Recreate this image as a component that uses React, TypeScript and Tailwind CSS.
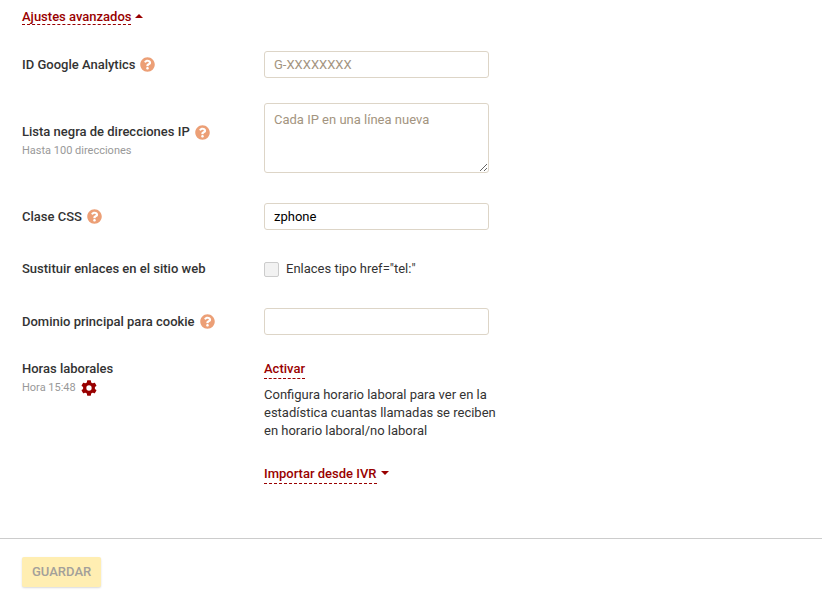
import clsx from 'clsx'
import { ReactNode, useState } from 'react'
import { FaQuestionCircle } from 'react-icons/fa'

type RowProps = {
  label: string
  htmlFor?: string
  hint?: ReactNode
  help?: boolean
  align?: 'center' | 'start'
  className?: string
  children: ReactNode
}

const Row = ({ label, htmlFor, hint, help, align = 'center', className, children }: RowProps) => {
  return (
    <div
      className={clsx(
        'grid grid-cols-[242px_minmax(0,225px)]',
        align === 'center' ? 'items-center' : 'items-start',
        className
      )}
    >
      <div>
        <div className="flex items-center gap-[5px]">
          {htmlFor ? (
            <label htmlFor={htmlFor} className="font-medium">
              {label}
            </label>
          ) : (
            <span className="font-medium">{label}</span>
          )}
          {help && (
            <button type="button" aria-label={`Ayuda: ${label}`} className="text-[#ec9f76]">
              <FaQuestionCircle size={15} />
            </button>
          )}
        </div>
        {hint && <div className="pt-px text-[11px] leading-[18px] text-[#999]">{hint}</div>}
      </div>
      <div>{children}</div>
    </div>
  )
}

const GearIcon = () => (
  <svg width="16" height="16" viewBox="0 0 24 24" fill="currentColor" aria-hidden="true">
    <circle cx="12" cy="12" r="6.5" fill="none" stroke="currentColor" strokeWidth="5" />
    {[0, 60, 120, 180, 240, 300].map(angle => (
      <rect
        key={angle}
        x="9"
        y="0.5"
        width="6"
        height="6"
        rx="1"
        transform={`rotate(${angle} 12 12)`}
      />
    ))}
  </svg>
)

const Caret = ({ up = false }: { up?: boolean }) => (
  <svg
    width="8"
    height="4"
    viewBox="0 0 8 4"
    fill="currentColor"
    className="mb-[3px]"
    aria-hidden="true"
  >
    <path d={up ? 'M0 4 4 0l4 4z' : 'M0 0h8L4 4z'} />
  </svg>
)

const fieldClass =
  'block w-full rounded-[3px] border border-[#ddd5c7] bg-white px-[9px] text-[13px] leading-[18px] text-black placeholder:text-[#a39480] focus:outline-none'

const linkClass = 'border-b border-dashed border-[#990000]'

export default function App() {
  const [cssClass, setCssClass] = useState('zphone')

  return (
    <form className="bg-white font-[Roboto,sans-serif] text-[13px] leading-[18px] text-[#333]">
      <div className="px-[22px] pt-[10px] pb-[54px]">
        <a href="#avanzados" className="flex items-center gap-1 font-medium text-[#990000]">
          <span className={clsx(linkClass, 'leading-[14px]')}>Ajustes avanzados</span>
          <Caret up />
        </a>

        <Row label="ID Google Analytics" htmlFor="analytics" help className="mt-[26px]">
          <input
            id="analytics"
            type="text"
            placeholder="G-XXXXXXXX"
            className={clsx(fieldClass, 'h-[27px]')}
          />
        </Row>

        <Row
          label="Lista negra de direcciones IP"
          htmlFor="blacklist"
          hint="Hasta 100 direcciones"
          help
          className="mt-[25px]"
        >
          <div className="pb-[7px]">
            <textarea
              id="blacklist"
              placeholder="Cada IP en una línea nueva"
              className={clsx(fieldClass, 'h-[70px] resize py-[7px]')}
            />
          </div>
        </Row>

        <Row label="Clase CSS" htmlFor="css-class" help className="mt-[23px]">
          <input
            id="css-class"
            type="text"
            value={cssClass}
            onChange={e => setCssClass(e.target.value)}
            className={clsx(fieldClass, 'h-[27px]')}
          />
        </Row>

        <Row label="Sustituir enlaces en el sitio web" className="mt-[30px]">
          <label className="flex items-center gap-[7px]">
            <input
              type="checkbox"
              className="size-[15px] appearance-none rounded-[2px] border border-[#ccc] bg-[#f2f2f2] checked:bg-[#990000]"
            />
            Enlaces tipo href="tel:"
          </label>
        </Row>

        <Row label="Dominio principal para cookie" htmlFor="domain" help className="mt-[30px]">
          <input id="domain" type="text" className={clsx(fieldClass, 'h-[27px]')} />
        </Row>

        <Row
          label="Horas laborales"
          align="start"
          className="mt-[25px]"
          hint={
            <span className="flex items-center gap-[5px]">
              Hora 15:48
              <button type="button" aria-label="Configurar hora" className="text-[#990000]">
                <GearIcon />
              </button>
            </span>
          }
        >
          <a href="#activar" className="flex font-medium text-[#990000]">
            <span className={linkClass}>Activar</span>
          </a>
          <p className="-mr-2 mt-[7px]">
            Configura horario laboral para ver en la estadística cuantas llamadas se reciben en
            horario laboral/no laboral
          </p>
          <a href="#importar" className="mt-[25px] flex items-center gap-1 font-medium text-[#990000]">
            <span className={linkClass}>Importar desde IVR</span>
            <Caret />
          </a>
        </Row>
      </div>

      <div className="border-t border-[#ccc] px-[22px] py-[18px]">
        <button
          type="submit"
          disabled
          className="h-[30px] rounded-[2px] bg-[#ffeeb2] px-[10px] font-medium text-[#a3a09a] shadow-[0_1px_2px_rgba(0,0,0,0.15)]"
        >
          GUARDAR
        </button>
      </div>
    </form>
  )
}
